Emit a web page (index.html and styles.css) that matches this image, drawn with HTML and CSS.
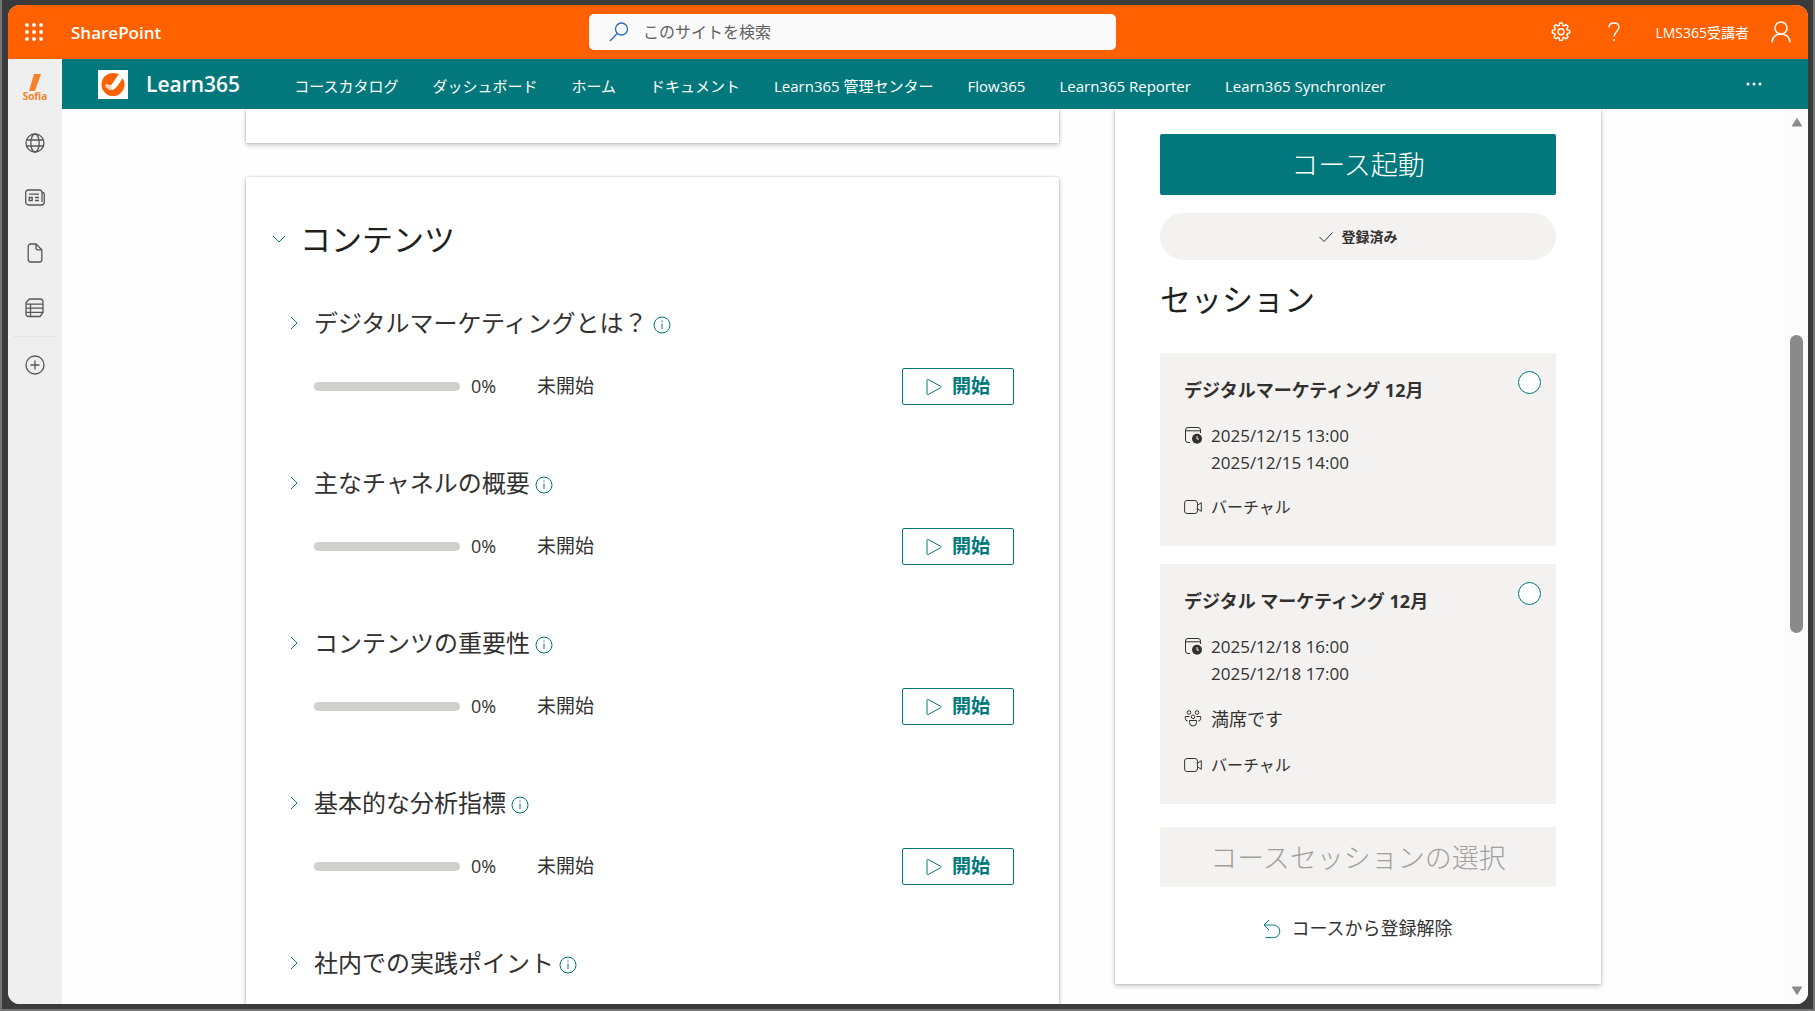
FILE: index.html
```html
<!DOCTYPE html>
<html lang="ja">
<head>
<meta charset="utf-8">
<title>Learn365</title>
<link rel="stylesheet" href="styles.css">
</head>
<body>
<svg class="sprite" aria-hidden="true">
  <symbol id="chevron" viewBox="0 0 8 14"><path d="M1 1l6 6-6 6"/></symbol>
  <symbol id="info" viewBox="0 0 18 18"><circle cx="9" cy="9" r="8"/><path d="M9 7.500v5.500M9 4.500v1.500"/></symbol>
  <symbol id="play" viewBox="0 0 16 18"><path d="M1 2.200v13.600c0 .7.600 1 1.200.7l12.300-6.700c.6-.4.600-1.200 0-1.600L2.200 1.500C1.600 1.200 1 1.500 1 2.200z"/></symbol>
  <symbol id="calendar" viewBox="0 0 18 18"><path d="M6 16.500H4A2.500 2.500 0 0 1 1.500 14V4A2.500 2.500 0 0 1 4 1.500h10A2.500 2.500 0 0 1 16.500 4v3M1.500 4.800h15"/><circle cx="13" cy="12.700" r="5" fill="#323130" stroke="none"/><path d="M13 10v3h2" stroke="#f3f2f1"/></symbol>
  <symbol id="video" viewBox="0 0 18 18"><rect x=".6" y="2.500" width="12.800" height="13" rx="2.500"/><path d="M13.400 7.300l3.900-2.600v8.600l-3.900-2.600"/></symbol>
  <symbol id="people" viewBox="0 0 18 18"><circle cx="5" cy="3.500" r="1.800"/><circle cx="13" cy="3.500" r="1.800"/><circle cx="9" cy="7.800" r="1.800"/><path d="M5.500 11.500h7v2a3.500 3.500 0 0 1-7 0zM5.500 7.500H1.300v2a2.700 2.700 0 0 0 2.500 2.600M12.500 7.500h4.200v2a2.700 2.700 0 0 1-2.500 2.600"/></symbol>
</svg>
<div class="window">
  <header class="suite">
    <div class="suite-start">
      <button class="icon-button" aria-label="アプリ起動ツール"><svg width="18" height="18" viewBox="0 0 18 18" fill="#fff"><circle cx="2" cy="2" r="1.900"/><circle cx="9" cy="2" r="1.900"/><circle cx="16" cy="2" r="1.900"/><circle cx="2" cy="9" r="1.900"/><circle cx="9" cy="9" r="1.900"/><circle cx="16" cy="9" r="1.900"/><circle cx="2" cy="16" r="1.900"/><circle cx="9" cy="16" r="1.900"/><circle cx="16" cy="16" r="1.900"/></svg></button>
      <a class="suite-name" href="#">SharePoint</a>
    </div>
    <label class="search">
      <svg width="20" height="20" viewBox="0 0 20 20" fill="none" stroke="#2b6cb8" stroke-width="1.300"><circle cx="12.500" cy="7" r="6"/><path d="M8.200 11.500L1 19"/></svg>
      <input type="search" aria-label="検索" placeholder="このサイトを検索">
    </label>
    <div class="suite-end">
      <button class="icon-button" aria-label="設定"><svg width="20" height="20" viewBox="0 0 20 20" fill="none" stroke="#fff" stroke-width="1.400" stroke-linejoin="round"><path d="M8.700 1h2.600l.5 2.300 1.400.6 2-1.300 1.900 1.900-1.300 2 .6 1.400 2.300.5v2.600l-2.300.5-.6 1.400 1.300 2-1.900 1.900-2-1.300-1.400.6-.5 2.300H8.700l-.5-2.300-1.400-.6-2 1.300-1.900-1.900 1.300-2-.6-1.400L1.300 11V8.400l2.300-.5.600-1.400-1.300-2 1.900-1.900 2 1.300 1.400-.6z"/><circle cx="10" cy="9.800" r="3"/></svg></button>
      <button class="icon-button" aria-label="ヘルプ"><svg width="14" height="20" viewBox="0 0 14 20" fill="none" stroke="#fff" stroke-width="1.400"><path d="M2 5.500C2 2.700 4 1 7 1s5 1.700 5 4.300C12 9 7.200 9.500 7.200 14.500M7.200 17v2"/></svg></button>
      <span class="user-name">LMS365受講者</span>
      <button class="icon-button" aria-label="アカウント"><svg width="20" height="22" viewBox="0 0 20 22" fill="none" stroke="#fff" stroke-width="1.500"><circle cx="10" cy="7" r="6"/><path d="M1 21.500c0-5 3.500-8.500 9-8.500s9 3.500 9 8.500"/></svg></button>
    </div>
  </header>
  <div class="body">
    <nav class="rail" aria-label="アプリ バー">
      <a class="rail-item rail-logo" href="#"><svg width="14" height="17" viewBox="0 0 14 17"><path d="M6 0h7L7 17H1z" fill="#f5822a"/></svg><span>Sofia</span></a>
      <a class="rail-item" href="#" aria-label="サイト"><svg width="20" height="20" viewBox="0 0 20 20"><circle cx="10" cy="10" r="9"/><ellipse cx="10" cy="10" rx="4.200" ry="9"/><path d="M1.500 7h17M1.500 13h17"/></svg></a>
      <a class="rail-item" href="#" aria-label="ニュース"><svg width="20" height="17" viewBox="0 0 20 17"><path d="M17 3.500h.5A1.800 1.800 0 0 1 19.300 5v8a3 3 0 0 1-3 3H3.700a3 3 0 0 1-3-3V3.500A2.500 2.500 0 0 1 3.200 1h11.300A2.500 2.500 0 0 1 17 3.500v9.500M4 5.200h10M10 8.500h4M10 11.500h4M4.200 8.500h3v3h-3z"/></svg></a>
      <a class="rail-item" href="#" aria-label="ファイル"><svg width="16" height="20" viewBox="0 0 16 20"><path d="M9 1H3.500A2.300 2.300 0 0 0 1.200 3.300v13.400A2.300 2.300 0 0 0 3.500 19h9a2.300 2.300 0 0 0 2.300-2.300V6.800zM9 1v4a1.800 1.800 0 0 0 1.800 1.800h4"/></svg></a>
      <a class="rail-item" href="#" aria-label="リスト"><svg width="20" height="20" viewBox="0 0 20 20"><path d="M4.500 1h11A2.500 2.500 0 0 1 18 3.500v11L15 18.500H3.500A2.500 2.500 0 0 1 1 16V4.500zM1 6.200h17M1 10.200h17M1 14.300h17M5.500 6.200v12.300"/></svg></a>
      <hr>
      <a class="rail-item" href="#" aria-label="作成"><svg width="20" height="20" viewBox="0 0 20 20"><circle cx="10" cy="10" r="9"/><path d="M10 5.500v9M5.500 10h9"/></svg></a>
    </nav>
    <div class="site">
      <div class="site-bar">
        <a class="brand" href="#"><svg width="30" height="29" viewBox="0 0 30 29"><path fill="#fff" d="M0 0h30v29H0z"/><circle cx="15" cy="14.500" r="11.500" fill="#ff6000"/><path d="M7.500 15c2-2 4 1 5.500 0 3-2.500 5-8.500 10-12.500l3.500 4C23 9 19 19.500 14 20c-3.500.2-6.500-2.500-6.500-5z" fill="#fff"/><path d="M7.500 15c2-2 4 1 5.500 0l1.500 4.900C10.500 20.500 7.500 17.500 7.500 15z" fill="#ffd0b5"/></svg>Learn365</a>
        <nav class="links">
          <a href="#">コースカタログ</a>
          <a href="#">ダッシュボード</a>
          <a href="#">ホーム</a>
          <a href="#">ドキュメント</a>
          <a href="#">Learn365 管理センター</a>
          <a href="#">Flow365</a>
          <a href="#">Learn365 Reporter</a>
          <a href="#">Learn365 Synchronizer</a>
        </nav>
        <button class="icon-button more" aria-label="その他"><svg width="16" height="4" viewBox="0 0 16 4" fill="#fff"><circle cx="2" cy="2" r="1.500"/><circle cx="8" cy="2" r="1.500"/><circle cx="14" cy="2" r="1.500"/></svg></button>
      </div>
      <div class="viewport">
        <main class="page">
          <div class="course">
            <section class="card card-above"></section>
            <section class="card contents">
              <h2><svg class="line chevron-down" width="14" height="8" viewBox="0 0 14 8"><path d="M1 1l6 6 6-6"/></svg>コンテンツ</h2>
              <article class="item">
                <h3><svg class="line" width="8" height="14"><use href="#chevron"/></svg>デジタルマーケティングとは？<svg class="line info" width="18" height="18"><use href="#info"/></svg></h3>
                <div class="status"><span class="bar"></span><span class="percent">0%</span><span>未開始</span><button class="start"><svg class="line" width="16" height="18"><use href="#play"/></svg>開始</button></div>
              </article>
              <article class="item">
                <h3><svg class="line" width="8" height="14"><use href="#chevron"/></svg>主なチャネルの概要<svg class="line info" width="18" height="18"><use href="#info"/></svg></h3>
                <div class="status"><span class="bar"></span><span class="percent">0%</span><span>未開始</span><button class="start"><svg class="line" width="16" height="18"><use href="#play"/></svg>開始</button></div>
              </article>
              <article class="item">
                <h3><svg class="line" width="8" height="14"><use href="#chevron"/></svg>コンテンツの重要性<svg class="line info" width="18" height="18"><use href="#info"/></svg></h3>
                <div class="status"><span class="bar"></span><span class="percent">0%</span><span>未開始</span><button class="start"><svg class="line" width="16" height="18"><use href="#play"/></svg>開始</button></div>
              </article>
              <article class="item">
                <h3><svg class="line" width="8" height="14"><use href="#chevron"/></svg>基本的な分析指標<svg class="line info" width="18" height="18"><use href="#info"/></svg></h3>
                <div class="status"><span class="bar"></span><span class="percent">0%</span><span>未開始</span><button class="start"><svg class="line" width="16" height="18"><use href="#play"/></svg>開始</button></div>
              </article>
              <article class="item">
                <h3><svg class="line" width="8" height="14"><use href="#chevron"/></svg>社内での実践ポイント<svg class="line info" width="18" height="18"><use href="#info"/></svg></h3>
              </article>
            </section>
          </div>
          <aside class="card enrol">
            <button class="launch">コース起動</button>
            <p class="enrolled"><svg width="14" height="10" viewBox="0 0 14 10" fill="none" stroke="#323130"><path d="M.5 5l4.500 4.500L13.500.5"/></svg>登録済み</p>
            <h2>セッション</h2>
            <section class="session">
              <div class="session-head"><label for="s1">デジタルマーケティング 12月</label><input type="radio" name="session" id="s1"></div>
              <p><svg class="dark" width="18" height="18"><use href="#calendar"/></svg><span class="dates">2025/12/15 13:00<br>2025/12/15 14:00</span></p>
              <p class="small"><svg class="dark" width="18" height="18"><use href="#video"/></svg>バーチャル</p>
            </section>
            <section class="session">
              <div class="session-head"><label for="s2">デジタル マーケティング 12月</label><input type="radio" name="session" id="s2"></div>
              <p><svg class="dark" width="18" height="18"><use href="#calendar"/></svg><span class="dates">2025/12/18 16:00<br>2025/12/18 17:00</span></p>
              <p class="seats"><svg class="dark" width="18" height="18"><use href="#people"/></svg>満席です</p>
              <p class="small"><svg class="dark" width="18" height="18"><use href="#video"/></svg>バーチャル</p>
            </section>
            <button class="select" disabled>コースセッションの選択</button>
            <button class="leave"><svg class="line" width="18" height="20" viewBox="0 0 18 20"><path d="M6 1L1 6l5 5M1 6h9.500a6.300 6.300 0 0 1 0 12.600H2.500"/></svg>コースから登録解除</button>
          </aside>
        </main>
        <div class="scrollbar" aria-hidden="true">
          <svg width="12" height="10" viewBox="0 0 12 10"><path d="M6 1.500L10.700 9H1.300z"/></svg>
          <div class="track"><div class="thumb"></div></div>
          <svg width="12" height="10" viewBox="0 0 12 10"><path d="M6 8.500L10.700 1H1.300z"/></svg>
        </div>
      </div>
    </div>
  </div>
</div>
</body>
</html>
```
FILE: styles.css
```css
* { box-sizing: border-box; }

body {
  margin: 0;
  height: 100vh;
  padding: 5px 5px 5px 6px;
  border: solid #757575;
  border-width: 0 2px 2px;
  background: #3b3b3b;
  color: #323130;
  font: 18px/27px "Open Sans", "Noto Sans CJK JP", sans-serif;
  overflow: hidden;
}

h2, h3, p { margin: 0; font-weight: 400; }
a { color: inherit; text-decoration: none; }
button, input { font: inherit; color: inherit; }
button { padding: 0; border: 0; background: none; }
svg { flex: none; }

.sprite { display: none; }
.line { fill: none; stroke: #03787c; }
.dark { fill: none; stroke: #323130; }
.icon-button { display: flex; align-items: center; justify-content: center; }

.window {
  display: flex;
  flex-direction: column;
  height: 100%;
  border-radius: 12px;
  overflow: hidden;
  background: #fff;
}

.suite {
  display: grid;
  grid-template-columns: 581fr 527fr 692fr;
  align-items: center;
  height: 54px;
  flex: none;
  background: #ff6000;
  color: #fff;
}
.suite-start { display: flex; align-items: center; gap: 28px; padding-left: 17px; }
.suite-name { font-weight: 600; font-size: 17px; }
.search {
  display: flex;
  align-items: center;
  gap: 14px;
  height: 36px;
  padding-left: 20px;
  border-radius: 5px;
  background: #fafafa;
}
.search input {
  flex: 1;
  min-width: 0;
  padding: 0;
  border: 0;
  outline: 0;
  background: none;
  font-size: 16px;
}
.search input::placeholder { color: #616161; opacity: 1; }
.suite-end {
  display: flex;
  align-items: center;
  justify-content: flex-end;
  padding-right: 17px;
  font-size: 14px;
}
.suite-end .icon-button { width: 20px; }
.suite-end .icon-button + .icon-button { margin-left: 33px; }
.user-name { margin: 0 22px 0 31px; }

.body { flex: 1; display: flex; min-height: 0; }

.rail { flex: none; width: 54px; padding-top: 1px; background: #efefef; }
.rail-item { display: flex; align-items: center; justify-content: center; height: 55px; }
.rail-item svg { fill: none; stroke: #555; stroke-width: 1.3; }
.rail-logo { flex-direction: column; color: #f5822a; font-size: 10px; line-height: 10px; font-weight: 700; }
.rail-logo svg { stroke: none; }
.rail hr { margin: 1px 5px 0; border: 0; border-top: 1px solid #e4e4e4; }

.site { flex: 1; min-width: 0; display: flex; flex-direction: column; }
.site-bar {
  flex: none;
  display: flex;
  align-items: center;
  height: 50px;
  padding: 0 46px 0 36px;
  background: #03787c;
  color: #fff;
}
.brand { display: flex; align-items: center; gap: 18px; font-size: 21px; font-weight: 600; }
.links {
  display: flex;
  gap: 34px;
  margin-left: 54px;
  padding-top: 4px;
  font-size: 15px;
  white-space: nowrap;
}
.more { margin-left: auto; }

.viewport { flex: 1; min-height: 0; display: flex; overflow: hidden; background: #fefefe; }
.page {
  flex: 1;
  display: grid;
  grid-template-columns: minmax(0, 813fr) minmax(0, 486fr);
  align-items: start;
  gap: 56px;
  max-width: 1355px;
  margin: 0 auto;
}
.card { background: #fff; box-shadow: 0 2px 5px rgba(0, 0, 0, .22), 0 0 2px rgba(0, 0, 0, .2); }
.card-above { height: 34px; margin-bottom: 34px; }
h2 { font-size: 31px; line-height: 46px; color: #201f1e; }

.contents { padding: 39px 45px 0 26px; }
.contents h2 { display: flex; align-items: center; gap: 14px; margin-bottom: 43px; }
.item { padding: 0 0 60px 18px; }
.item h3 { display: flex; align-items: center; gap: 16px; font-size: 24px; line-height: 36px; margin-bottom: 27px; }
.item .info { margin: 3px 0 0 -11px; }
.status { display: flex; align-items: center; height: 37px; padding-left: 24px; font-size: 19px; }
.bar { width: 146px; height: 9px; margin-right: 11px; border-radius: 5px; background: #d0d0cf; }
.percent { width: 66px; font-size: 18px; }
.start {
  display: flex;
  align-items: center;
  justify-content: center;
  gap: 10px;
  width: 112px;
  height: 37px;
  margin-left: auto;
  border: 1px solid #03787c;
  border-radius: 2px;
  color: #03787c;
  font-weight: 700;
}

.enrol { display: flex; flex-direction: column; padding: 25px 45px 42px; }
.launch, .select {
  height: 61px;
  border-radius: 2px;
  font-size: 27px;
  font-weight: 200;
}
.launch { background: #03787c; color: #fff; }
.enrolled {
  display: flex;
  align-items: center;
  justify-content: center;
  gap: 9px;
  height: 47px;
  margin: 18px 0 16px;
  border-radius: 24px;
  background: #f3f2f1;
  font-size: 14px;
  font-weight: 700;
}
.enrol h2 { margin-bottom: 31px; }
.session { display: flex; flex-direction: column; gap: 18px; margin-bottom: 18px; padding: 18px 15px 25px 24px; background: #f3f2f1; }
.session-head { display: flex; align-items: flex-start; justify-content: space-between; }
.session-head label { padding-top: 6px; font-weight: 700; }
.session-head input {
  appearance: none;
  width: 23px;
  height: 23px;
  margin: 0;
  border: 1px solid #03787c;
  border-radius: 50%;
  background: #fff;
}
.session p { display: flex; gap: 9px; }
.session p svg { margin-top: 4px; }
.session .dates { font-size: 17px; }
.session .small { font-size: 16px; }
.session .seats { line-height: 29px; }
.select { height: 60px; margin-top: 5px; background: #f3f2f1; color: #a19f9d; }
.leave { display: flex; align-items: center; justify-content: center; gap: 10px; margin-top: 28px; }

.scrollbar {
  flex: none;
  display: flex;
  flex-direction: column;
  align-items: center;
  width: 23px;
  padding: 8px 0;
  background: #fbfbfb;
}
.scrollbar svg { fill: #8a8a8a; stroke: #8a8a8a; stroke-linejoin: round; }
.track { flex: 1; width: 13px; padding-top: 208px; }
.thumb { height: 36%; min-height: 298px; border-radius: 7px; background: #8a8a8a; }
```
